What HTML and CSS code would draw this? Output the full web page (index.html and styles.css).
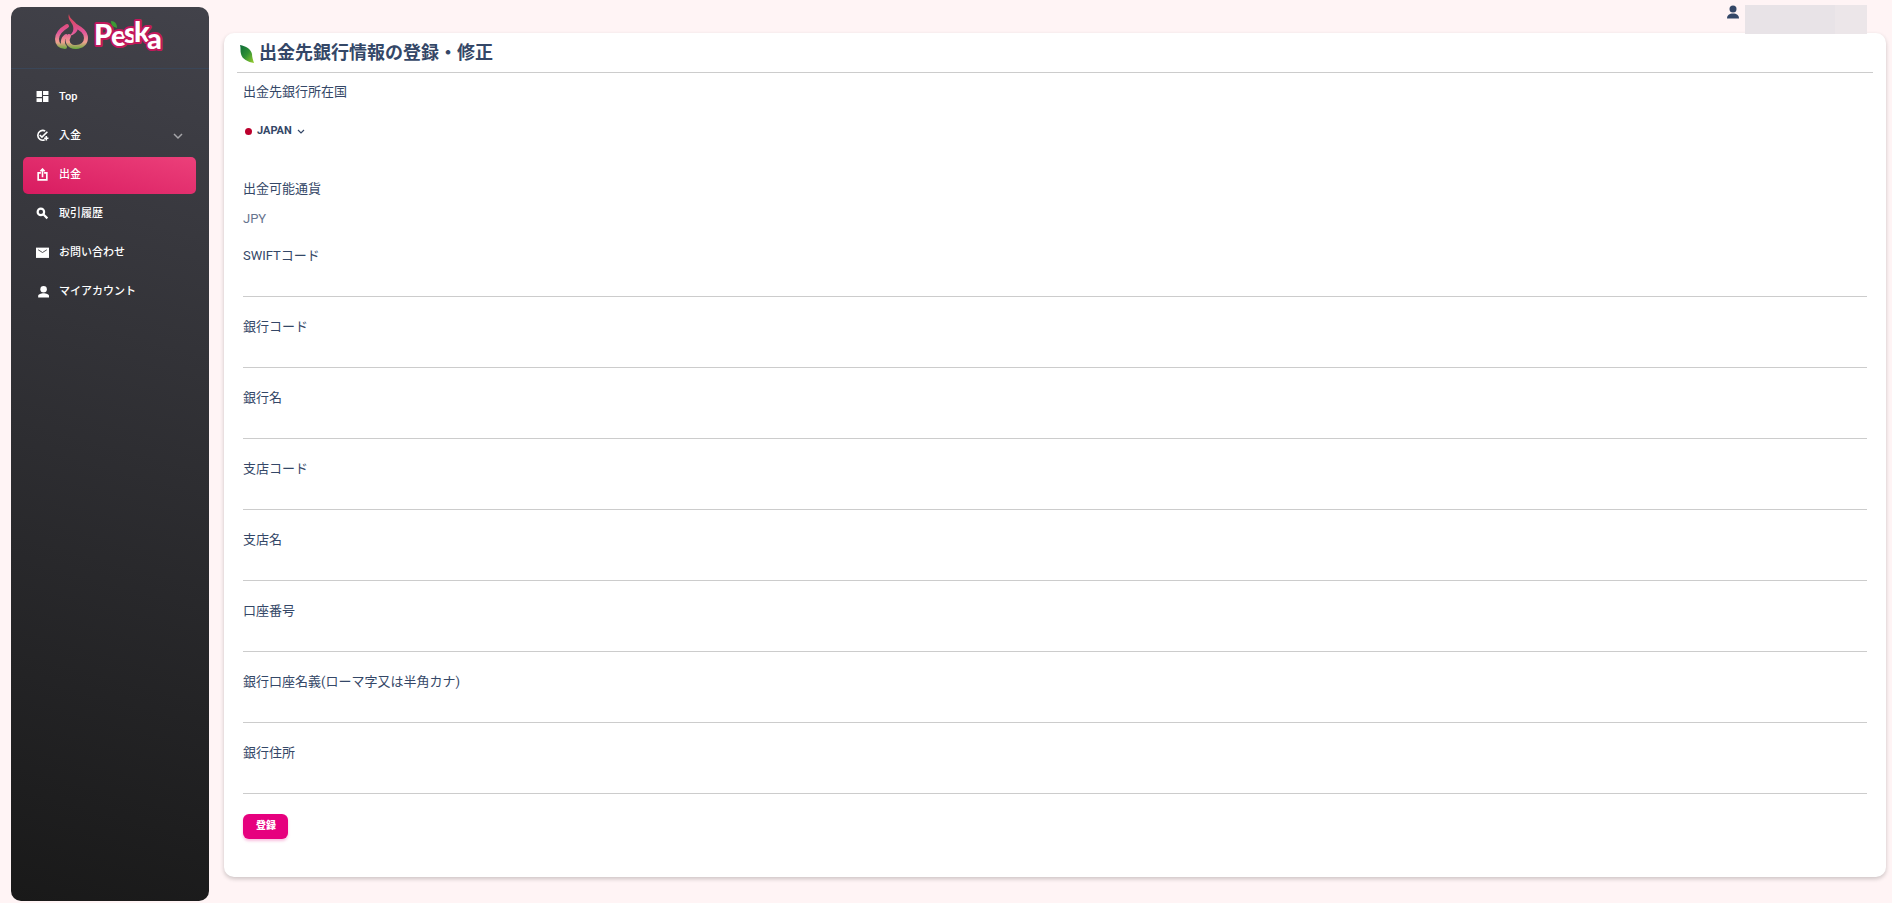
FILE: index.html
```html
<!DOCTYPE html>
<html lang="ja">
<head>
<meta charset="utf-8">
<title>出金先銀行情報の登録・修正</title>
<link rel="stylesheet" href="styles.css">
</head>
<body>
<div class="layout">
  <aside class="sidebar">
    <a class="brand" href="#" aria-label="Peska">
      <svg class="brand-mark" viewBox="0 0 33 36" aria-hidden="true">
        <defs>
          <linearGradient id="peach" gradientUnits="userSpaceOnUse" x1="0" y1="0" x2="0" y2="36">
            <stop offset="0" stop-color="#d8434f"/>
            <stop offset="0.5" stop-color="#e0559a"/>
            <stop offset="0.78" stop-color="#f0a090"/>
            <stop offset="1" stop-color="#4fae2e"/>
          </linearGradient>
        </defs>
        <path d="M12 12C7 15 2 19 2 25c0 5 3 8 8 8-3-3-3-8 1-11" fill="none" stroke="url(#peach)" stroke-width="4" stroke-linecap="round" stroke-linejoin="round"/>
        <path d="M14 22c-3 5-1 11 7 11 6 0 10-4 10-9 0-6-5-9-10-12" fill="none" stroke="url(#peach)" stroke-width="4" stroke-linecap="round"/>
        <path d="M14 0c0 5 8 8 9 13 0 5-4 8-9 9 4-3 5-6 4-10-1-4-6-7-4-12z" fill="url(#peach)"/>
      </svg>
      <svg class="brand-name" viewBox="0 0 71 40" aria-hidden="true">
        <text class="brand-letters" x="1 18 31 41 54" y="31 32 29 28 35">Peska</text>
        <path d="M18 7c4 0 6 3 6 7-4-1-6-3-6-7z" fill="#3c9a35"/>
      </svg>
    </a>
    <nav class="menu">
      <a class="menu-item" href="#">
        <svg viewBox="0 0 24 24"><path d="M1 2h10v11H1zM13 2h10v7H13zM13 11h10v11H13zM1 15h10v7H1z"/></svg>
        <span>Top</span>
      </a>
      <a class="menu-item" href="#">
        <svg viewBox="0 0 24 24"><path d="M16 20A9 9 0 1 1 17 4M7 11l4 4 10-10M19 13v8M15 17h8" fill="none" stroke="currentColor" stroke-width="3"/></svg>
        <span>入金</span>
        <svg class="menu-caret" viewBox="0 0 10 10"><path d="M1 3l4 4 4-4" fill="none" stroke="currentColor" stroke-width="1.5"/></svg>
      </a>
      <a class="menu-item active" href="#" aria-current="page">
        <svg viewBox="0 0 24 24"><path d="M9 9H4v13h16V9h-5M12 17V3M8 6l4-4 4 4" fill="none" stroke="currentColor" stroke-width="3"/></svg>
        <span>出金</span>
      </a>
      <a class="menu-item" href="#">
        <svg viewBox="0 0 24 24"><path d="M13 13l8 8" fill="none" stroke="currentColor" stroke-width="4"/><circle cx="9" cy="9" r="6" fill="none" stroke="currentColor" stroke-width="4"/></svg>
        <span>取引履歴</span>
      </a>
      <a class="menu-item" href="#">
        <svg viewBox="0 0 24 24"><path d="M0 3h24v19H0z"/><path d="M4 7l8 5 8-5" fill="none" stroke="#3a3a3f" stroke-width="1.600"/></svg>
        <span>お問い合わせ</span>
      </a>
      <a class="menu-item" href="#">
        <svg viewBox="0 0 24 24"><circle cx="14" cy="8" r="6"/><path d="M4 23v-3c0-3 5-5 10-5s10 2 10 5v3z"/></svg>
        <span>マイアカウント</span>
      </a>
    </nav>
  </aside>

  <main class="content">
    <header class="topbar">
      <svg class="user-icon" viewBox="0 0 24 28" aria-hidden="true"><circle cx="12" cy="8" r="7"/><path d="M0 27c0-7 5-10 12-10s12 3 12 10z"/></svg>
      <div class="user-mask"></div>
    </header>
    <section class="card">
      <h1 class="title">
        <svg class="leaf" viewBox="0 0 14 18" aria-hidden="true">
          <defs>
            <linearGradient id="leaf" x1="0" y1="0" x2="1" y2="1">
              <stop offset="0" stop-color="#0b6b39"/>
              <stop offset="0.5" stop-color="#2f8f35"/>
              <stop offset="1" stop-color="#9bd02c"/>
            </linearGradient>
          </defs>
          <path d="M0 0c6 1 11 4 12 9 0 3 1 6 2 9C8 17 2 14 1 9 0 6 1 3 0 0z" fill="url(#leaf)"/>
        </svg>
        出金先銀行情報の登録・修正
      </h1>
      <form class="form">
        <p class="label">出金先銀行所在国</p>
        <button class="country" type="button">
          <span class="flag"></span>JAPAN
          <svg viewBox="0 0 8 8" aria-hidden="true"><path d="M1 3l3 3 3-3" fill="none" stroke="currentColor" stroke-width="1.200"/></svg>
        </button>
        <p class="label">出金可能通貨</p>
        <p class="currency">JPY</p>
        <div class="field"><label for="swift">SWIFTコード</label><input id="swift" type="text"></div>
        <div class="field"><label for="bank-code">銀行コード</label><input id="bank-code" type="text"></div>
        <div class="field"><label for="bank-name">銀行名</label><input id="bank-name" type="text"></div>
        <div class="field"><label for="branch-code">支店コード</label><input id="branch-code" type="text"></div>
        <div class="field"><label for="branch-name">支店名</label><input id="branch-name" type="text"></div>
        <div class="field"><label for="account">口座番号</label><input id="account" type="text"></div>
        <div class="field"><label for="holder">銀行口座名義(ローマ字又は半角カナ)</label><input id="holder" type="text"></div>
        <div class="field"><label for="address">銀行住所</label><input id="address" type="text"></div>
        <button class="submit" type="submit">登録</button>
      </form>
    </section>
  </main>
</div>
</body>
</html>
```
FILE: styles.css
```css
* { box-sizing: border-box; }

body {
  margin: 0;
  background: #fff4f5;
  color: #344767;
  font-family: Roboto, "Noto Sans CJK JP", sans-serif;
  font-size: 13px;
  line-height: 20px;
}

h1, p { margin: 0; }
svg { display: block; fill: currentColor; }

.layout {
  display: flex;
  gap: 15px;
  min-height: 100vh;
  padding: 0 6px 0 11px;
}

/* Sidebar */
.sidebar {
  flex: 0 0 198px;
  margin: 7px 0 2px;
  border-radius: 10px;
  background: linear-gradient(195deg, #42424a, #191919);
  color: #fff;
}

.brand {
  display: flex;
  gap: 5px;
  height: 62px;
  padding: 7px 0 0 44px;
  border-bottom: 1px solid #3a4658;
}
.brand-mark { width: 33px; height: 36px; }
.brand-name { width: 71px; height: 40px; overflow: visible; }
.brand-letters {
  fill: #fff;
  stroke: #c2185b;
  stroke-width: 4px;
  stroke-linejoin: round;
  paint-order: stroke;
  font-family: Lato, sans-serif;
  font-size: 29px;
  font-weight: 900;
}

.menu {
  display: flex;
  flex-direction: column;
  gap: 2px;
  padding: 10px 13px 0 12px;
}
.menu-item {
  display: flex;
  align-items: center;
  gap: 10px;
  height: 37px;
  padding: 0 13px 2px;
  border-radius: 5px;
  color: #fff;
  font-size: 11px;
  font-weight: 500;
  text-decoration: none;
}
.menu-item svg { width: 13px; height: 13px; }
.menu-item .menu-caret { width: 10px; height: 10px; margin-left: auto; color: #a5a5a9; }
.menu-item.active { background: linear-gradient(195deg, #ec407a, #d81b60); }

/* Main area */
.content { flex: 1; min-width: 0; }

.topbar {
  display: flex;
  justify-content: flex-end;
  gap: 6px;
  height: 33px;
  padding: 5px 19px 0 0;
}
.user-icon { width: 12px; height: 14px; }
.user-mask {
  position: relative;
  width: 122px;
  height: 29px;
  background: linear-gradient(90deg, #e8e3e7 74%, #ece6e9 74%);
}

.card {
  padding: 0 13px 38px;
  border-radius: 10px;
  background: #fff;
  box-shadow: 0 2px 4px rgba(0, 0, 0, 0.2);
}

.title {
  display: flex;
  align-items: center;
  gap: 5px;
  height: 40px;
  padding-left: 3px;
  border-bottom: 1px solid #ccc;
  font-size: 18px;
  font-weight: 700;
}
.leaf { width: 14px; height: 18px; margin-top: 2px; }

.form {
  display: flex;
  flex-direction: column;
  align-items: flex-start;
  padding: 9px 6px 0;
}

.country {
  display: flex;
  align-items: center;
  gap: 5px;
  height: 20px;
  margin: 19px 0 38px;
  padding: 0 2px;
  border: 0;
  background: none;
  color: inherit;
  font: 700 11px/20px Roboto, sans-serif;
}
.country svg { width: 8px; height: 8px; }
.flag { width: 7px; height: 7px; border-radius: 50%; background: #bc002d; }

.currency { margin: 10px 0 17px; color: #67748e; }

.field {
  display: flex;
  flex-direction: column;
  width: 100%;
  margin-bottom: 20px;
}
.field input {
  width: 100%;
  height: 31px;
  padding: 5px 0;
  border: 0;
  border-bottom: 1px solid #ccc;
  outline: 0;
  background: none;
  color: inherit;
  font: inherit;
}
.field label { height: 20px; }

.submit {
  height: 25px;
  padding: 0 12px 2px 13px;
  border: 0;
  border-radius: 6px;
  background: #e6007e;
  box-shadow: 0 2px 3px rgba(230, 0, 126, 0.25);
  color: #fff;
  font: 900 10px/20px Roboto, "Noto Sans CJK JP", sans-serif;
}
```
